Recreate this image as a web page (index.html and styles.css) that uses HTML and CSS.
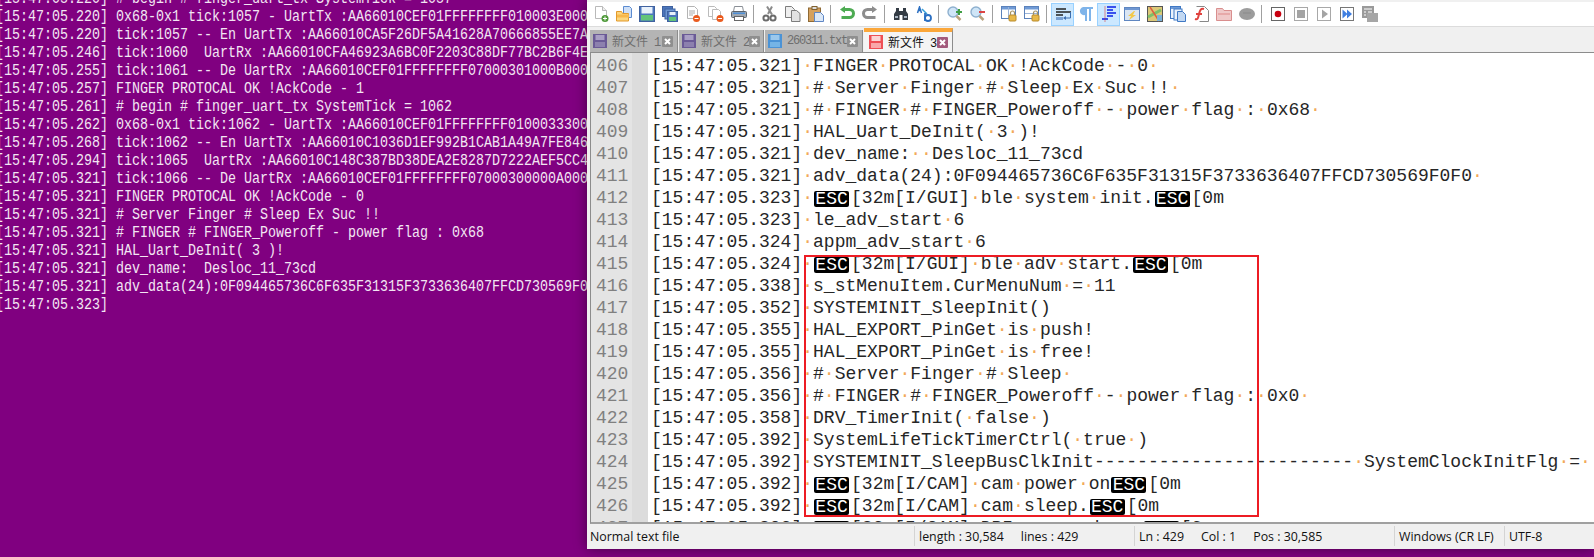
FILE: index.html
```html
<!DOCTYPE html>
<html lang="zh">
<head>
<meta charset="utf-8">
<title>Notepad++</title>
<link rel="stylesheet" href="styles.css">
</head>
<body>
<div class="desk">
<section class="term">
<div class="term-text">
<div>[15:47:05.220] # begin # finger_uart_tx SystemTick = 1057</div>
<div>[15:47:05.220] 0x68-0x1 tick:1057 - UartTx :AA66010CEF01FFFFFFFF010003E0000000</div>
<div>[15:47:05.220] tick:1057 -- En UartTx :AA66010CA5F26DF5A41628A70666855EE7A000</div>
<div>[15:47:05.246] tick:1060  UartRx :AA66010CFA46923A6BC0F2203C88DF77BC2B6F4E00</div>
<div>[15:47:05.255] tick:1061 -- De UartRx :AA66010CEF01FFFFFFFF07000301000B00000</div>
<div>[15:47:05.257] FINGER PROTOCAL OK !AckCode - 1</div>
<div>[15:47:05.261] # begin # finger_uart_tx SystemTick = 1062</div>
<div>[15:47:05.262] 0x68-0x1 tick:1062 - UartTx :AA66010CEF01FFFFFFFF0100033300000</div>
<div>[15:47:05.268] tick:1062 -- En UartTx :AA66010C1036D1EF992B1CAB1A49A7FE84600</div>
<div>[15:47:05.294] tick:1065  UartRx :AA66010C148C387BD38DEA2E8287D7222AEF5CC400</div>
<div>[15:47:05.321] tick:1066 -- De UartRx :AA66010CEF01FFFFFFFF07000300000A00000</div>
<div>[15:47:05.321] FINGER PROTOCAL OK !AckCode - 0</div>
<div>[15:47:05.321] # Server Finger # Sleep Ex Suc !!</div>
<div>[15:47:05.321] # FINGER # FINGER_Poweroff - power flag : 0x68</div>
<div>[15:47:05.321] HAL_Uart_DeInit( 3 )!</div>
<div>[15:47:05.321] dev_name:  Desloc_11_73cd</div>
<div>[15:47:05.321] adv_data(24):0F094465736C6F635F31315F3733636407FFCD730569F0F0</div>
<div>[15:47:05.323]</div>
</div>
</section>

<section class="npp">
<div class="toolbar">
<span class="btn"><svg viewBox="0 0 16 16"><path d="M2.500.5h7l4 4v8h-11z" fill="#fff" stroke="#b9b9b9"/><path d="M9.500.5v4h4" fill="#eee" stroke="#b9b9b9"/><circle cx="12" cy="12.500" r="3.500" fill="#4f9a3a"/><path d="M10 12.500h4M12 10.500v4" stroke="#fff"/></svg></span>
<span class="btn"><svg viewBox="0 0 16 16"><path d="M7.500.5h6l2 2v9h-8z" fill="#cfe0f7" stroke="#5b8bd0"/><path d="M.5 5.500h5l1 2h6v7.500h-12z" fill="#fbd680" stroke="#e39a2b"/><path d="M1 10h12" stroke="#f8b84a" stroke-width="3"/></svg></span>
<span class="btn"><svg viewBox="0 0 16 16"><rect x=".5" y=".5" width="15" height="15" fill="#4c76bc" stroke="#40629f"/><rect x="2.500" y="1" width="11" height="6.500" fill="#e8f1fb"/><rect x="2" y="9" width="12" height="5.500" fill="#62c47a"/></svg></span>
<span class="btn"><svg viewBox="0 0 16 16"><rect x=".5" y=".5" width="10" height="10" fill="#4c76bc" stroke="#3f62a0"/><rect x="3" y="3" width="10" height="10" fill="#6d97d4" stroke="#3f62a0"/><rect x="5.500" y="5.500" width="10" height="10" fill="#4c76bc" stroke="#3f62a0"/><rect x="7.500" y="6" width="6" height="3" fill="#e8f1fb"/><rect x="7" y="11" width="7" height="4" fill="#62c47a"/></svg></span>
<span class="btn"><svg viewBox="0 0 16 16"><path d="M2.500.5h7l3 3v9h-10z" fill="#fff" stroke="#b4b4b4"/><path d="M4 5h6M4 7h6M4 9h4" stroke="#aaa"/><circle cx="11.500" cy="12.500" r="3.500" fill="#ea5b1f"/><path d="M9.500 12.500h4" stroke="#fff"/></svg></span>
<span class="btn"><svg viewBox="0 0 16 16"><path d="M.5.5h6l2 2v8h-8z" fill="#fff" stroke="#bbb"/><path d="M4.500 3.500h6l2 2v8h-8z" fill="#fff" stroke="#bbb"/><circle cx="12" cy="12.500" r="3.500" fill="#ea5b1f"/><path d="M10 12.500h4" stroke="#fff"/></svg></span>
<span class="btn"><svg viewBox="0 0 16 16"><path d="M3.500.5h8l1 5h-10z" fill="#fff" stroke="#8a8f96"/><rect x=".5" y="5.500" width="15" height="6" rx="1" fill="#9fa8b2" stroke="#5d646c"/><rect x="2" y="6.500" width="12" height="1.500" fill="#4f8fd6"/><rect x="3.500" y="10.500" width="9" height="4" fill="#fff" stroke="#666"/></svg></span>
<span class="sep"></span>
<span class="btn"><svg viewBox="0 0 16 16"><path d="M10 .5L6 8M5 .5l5 8" fill="none" stroke="#8b8b8b" stroke-width="2"/><circle cx="4" cy="12" r="2.600" fill="none" stroke="#6b6b6b" stroke-width="2"/><circle cx="11" cy="12" r="2.600" fill="none" stroke="#6b6b6b" stroke-width="2"/></svg></span>
<span class="btn"><svg viewBox="0 0 16 16"><path d="M.5.5h6l3 3v8h-9z" fill="#efefef" stroke="#7d7d7d"/><path d="M6.500 4.500h5l3.500 3v8h-8.500z" fill="#e2e2e2" stroke="#7d7d7d"/></svg></span>
<span class="btn"><svg viewBox="0 0 16 16"><rect x=".5" y="2" width="12" height="13.500" fill="#d5a15e" stroke="#8f6a35"/><rect x="4" y=".5" width="5" height="3" fill="#ddd" stroke="#80602f"/><path d="M6.500 6.500h6l3 3v6h-9z" fill="#dbe8f8" stroke="#5f86c4"/></svg></span>
<span class="sep"></span>
<span class="btn"><svg viewBox="0 0 16 16"><path d="M4 3.500h6.500a4 4 0 0 1 0 8H2.500" fill="none" stroke="#4dab52" stroke-width="3"/><path d="M6 0L1 3.500 6 7z" fill="#4dab52"/></svg></span>
<span class="btn"><svg viewBox="0 0 16 16"><path d="M12 3.500H5.500a4 4 0 0 0 0 8h8" fill="none" stroke="#8d8d8d" stroke-width="3"/><path d="M10 0l5 3.500L10 7z" fill="#8d8d8d"/></svg></span>
<span class="sep"></span>
<span class="btn"><svg viewBox="0 0 16 16"><path d="M3 2h3v3h4V2h3v3l2 3v6H9.500V9h-3v5H1V8l2-3z" fill="#333b44"/><path d="M2 10h3v2H2zM11 10h3v2h-3z" fill="#aab6c4"/></svg></span>
<span class="btn"><svg viewBox="0 0 16 16"><path d="M1.500 7l2-6 2 6M2.500 4.500h2" fill="none" stroke="#2b6fc2" stroke-width="1.500"/><path d="M6 3l5 5" stroke="#38a0d8" stroke-width="1.500"/><circle cx="12" cy="12" r="3" fill="none" stroke="#2b6fc2" stroke-width="1.800"/><path d="M9 7v8" stroke="#2b6fc2" stroke-width="1.800"/></svg></span>
<span class="sep"></span>
<span class="btn"><svg viewBox="0 0 16 16"><circle cx="6" cy="6" r="5" fill="#cfe5f7" stroke="#8eb0cf" stroke-width="1.400"/><path d="M9.500 10l4 4" stroke="#b9a27e" stroke-width="2.500"/><path d="M9 6h6M12 3v6" stroke="#3f9e43" stroke-width="2"/></svg></span>
<span class="btn"><svg viewBox="0 0 16 16"><circle cx="6" cy="6" r="5" fill="#cfe5f7" stroke="#8eb0cf" stroke-width="1.400"/><path d="M9.500 10l4 4" stroke="#b9a27e" stroke-width="2.500"/><path d="M9 6h6" stroke="#dd4444" stroke-width="2"/></svg></span>
<span class="sep"></span>
<span class="btn"><svg viewBox="0 0 16 16"><rect x=".5" y=".5" width="14" height="12" fill="#fff" stroke="#5b82bb"/><rect x="1" y="1" width="13" height="2.500" fill="#6f9ad6"/><path d="M7.500 1v11" stroke="#9ab4d9"/><rect x="8" y="9" width="7" height="6" rx="1" fill="#e8b94a" stroke="#b98b2a"/><path d="M9.500 9V7a2 2 0 0 1 4 0v2" fill="none" stroke="#a59262" stroke-width="1.200"/></svg></span>
<span class="btn"><svg viewBox="0 0 16 16"><rect x=".5" y=".5" width="14" height="12" fill="#fff" stroke="#5b82bb"/><rect x="1" y="1" width="13" height="2.500" fill="#6f9ad6"/><path d="M1 7.500h13" stroke="#9ab4d9"/><rect x="8" y="9" width="7" height="6" rx="1" fill="#e8b94a" stroke="#b98b2a"/><path d="M9.500 9V7a2 2 0 0 1 4 0v2" fill="none" stroke="#a59262" stroke-width="1.200"/></svg></span>
<span class="sep"></span>
<span class="btn on"><svg viewBox="0 0 16 16"><path d="M1 3h10M1 6h15M1 9h7" stroke="#222" stroke-width="1.300"/><path d="M15.500 6v6H9" fill="none" stroke="#3c6fb0"/><path d="M11 10v4l-3-2z" fill="#3c6fb0"/><rect x="1" y="11" width="7" height="3" fill="#7aa2d4"/></svg></span>
<span class="btn"><svg viewBox="0 0 16 16"><path d="M5 1h10v2h-2v12h-2V3H9v12H7V9a4 4 0 0 1-2-8z" fill="#7fb4ea"/></svg></span>
<span class="btn on"><svg viewBox="0 0 16 16"><path d="M6 1h9M6 4h6M6 7h9M6 10h6M1 13h6" stroke="#0a1ee6" stroke-width="1.600"/><path d="M4 .5v15" stroke="#d92020" stroke-dasharray="1 1"/></svg></span>
<span class="btn"><svg viewBox="0 0 16 16"><rect x=".5" y="1.500" width="15" height="13" fill="#dbe6f3" stroke="#5f86c0"/><rect x="1" y="2" width="14" height="2" fill="#6f97d2"/><path d="M10 5L4 10h3l-2 4 7-5H9l2-4z" fill="#f3c94a"/></svg></span>
<span class="btn"><svg viewBox="0 0 16 16"><rect x=".5" y=".5" width="15" height="15" fill="#dbc878" stroke="#555"/><path d="M1 11L14 4" stroke="#7cc06a" stroke-width="3"/><path d="M3 1l9 14" stroke="#de5f3d" stroke-width="1.500"/><rect x="10" y="9" width="5" height="6" fill="#7db2d8"/></svg></span>
<span class="btn"><svg viewBox="0 0 16 16"><rect x=".5" y=".5" width="10" height="12" fill="#eaf2fc" stroke="#3f78c4"/><rect x="1" y="1" width="9" height="2" fill="#6f9ad6"/><rect x="4" y="3" width="8" height="11" fill="#eaf2fc" stroke="#3f78c4"/><path d="M7.500 5.500h5l3 3v7h-8z" fill="#c2d8f2" stroke="#3f78c4"/></svg></span>
<span class="btn"><svg viewBox="0 0 16 16"><path d="M3.500.5h8l4 4v11h-9" fill="#fff" stroke="#888"/><path d="M2 13c3 1 3-1 4-5s2-6 5-5M3 8h6" fill="none" stroke="#e0433f" stroke-width="2"/></svg></span>
<span class="btn"><svg viewBox="0 0 16 16"><path d="M.5 2.500h6l1.500 2h7.500v10H.5z" fill="#f0c9c9" stroke="#d98e8e"/><path d="M2 7h12v2H2z" fill="#e7a9a9"/></svg></span>
<span class="btn"><svg viewBox="0 0 16 16"><ellipse cx="8" cy="8" rx="8" ry="6" fill="#9c9c9c"/><path d="M4 7h8" stroke="#8a8a8a"/></svg></span>
<span class="sep"></span>
<span class="btn sm"><svg viewBox="0 0 14 14"><rect x=".5" y=".5" width="13" height="13" fill="#fff" stroke="#666"/><circle cx="7" cy="7" r="3.300" fill="#c80010"/></svg></span>
<span class="btn sm"><svg viewBox="0 0 14 14"><rect x=".5" y=".5" width="13" height="13" fill="#fff" stroke="#a8a8a8"/><rect x="3" y="3" width="8" height="8" fill="#a4a4a4"/></svg></span>
<span class="btn sm"><svg viewBox="0 0 14 14"><rect x=".5" y=".5" width="13" height="13" fill="#fff" stroke="#a8a8a8"/><path d="M5 2.500l6 4.500-6 4.500z" fill="#a4a4a4"/></svg></span>
<span class="btn sm"><svg viewBox="0 0 14 14"><rect x=".5" y=".5" width="13" height="13" fill="#fff" stroke="#777"/><path d="M2.500 2.500l5 4.500-5 4.500zM7 2.500l5 4.500-5 4.500z" fill="#3f7ee0"/></svg></span>
<span class="btn"><svg viewBox="0 0 16 16"><rect width="12" height="12" fill="#9a9a9a"/><rect x="5" y="7" width="11" height="9" fill="#a6a6a6"/><path d="M2 3h8M2 6h2M6 6h4M2 9h2" stroke="#fff"/></svg></span>
</div>

<div class="tabs">
<div class="tab t1"><svg class="tab-ico" viewBox="0 0 14 14"><rect width="14" height="14" fill="#6a5a96"/><rect x="2.500" y="1" width="9" height="5" fill="#a99fc4"/><rect x="2" y="8" width="10" height="5" fill="#8c80ae"/></svg><span class="tab-l"><span class="cjk">新文件</span> 1</span><svg class="x" viewBox="0 0 11 11"><rect width="11" height="11" rx="1"/><path d="M3 3l5 5M8 3l-5 5" stroke="#fff" stroke-width="2"/></svg></div>
<div class="tab t2"><svg class="tab-ico" viewBox="0 0 14 14"><rect width="14" height="14" fill="#6a5a96"/><rect x="2.500" y="1" width="9" height="5" fill="#a99fc4"/><rect x="2" y="8" width="10" height="5" fill="#8c80ae"/></svg><span class="tab-l"><span class="cjk">新文件</span> 2</span><svg class="x" viewBox="0 0 11 11"><rect width="11" height="11" rx="1"/><path d="M3 3l5 5M8 3l-5 5" stroke="#fff" stroke-width="2"/></svg></div>
<div class="tab t3"><svg class="tab-ico" viewBox="0 0 14 14"><rect width="14" height="14" fill="#4b93d6"/><rect x="2.500" y="1" width="9" height="5" fill="#9cc8ec"/><rect x="2" y="8" width="10" height="5" fill="#75b4e6"/></svg><span class="tab-l">260311.txt</span><svg class="x" viewBox="0 0 11 11"><rect width="11" height="11" rx="1"/><path d="M3 3l5 5M8 3l-5 5" stroke="#fff" stroke-width="2"/></svg></div>
<div class="tab t4 active"><svg class="tab-ico" viewBox="0 0 14 14"><rect width="14" height="14" fill="#ee4f55"/><rect x="2.500" y="1" width="9" height="5" fill="#fbd5d5"/><rect x="2" y="8" width="10" height="5" fill="#f9a7a9"/></svg><span class="tab-l"><span class="cjk">新文件</span> 3</span><svg class="x" viewBox="0 0 11 11"><rect width="11" height="11" rx="1"/><path d="M3 3l5 5M8 3l-5 5" stroke="#fff" stroke-width="2"/></svg></div>
</div>

<div class="editor">
<div class="gutter">
<div>406</div><div>407</div><div>408</div><div>409</div><div>410</div><div>411</div><div>412</div><div>413</div><div>414</div><div>415</div><div>416</div><div>417</div><div>418</div><div>419</div><div>420</div><div>421</div><div>422</div><div>423</div><div>424</div><div>425</div><div>426</div><div>427</div>
</div>
<div class="code">
<div>[15:47:05.321]<i>·</i>FINGER<i>·</i>PROTOCAL<i>·</i>OK<i>·</i>!AckCode<i>·</i>-<i>·</i>0<i>·</i></div>
<div>[15:47:05.321]<i>·</i>#<i>·</i>Server<i>·</i>Finger<i>·</i>#<i>·</i>Sleep<i>·</i>Ex<i>·</i>Suc<i>·</i>!!<i>·</i></div>
<div>[15:47:05.321]<i>·</i>#<i>·</i>FINGER<i>·</i>#<i>·</i>FINGER_Poweroff<i>·</i>-<i>·</i>power<i>·</i>flag<i>·</i>:<i>·</i>0x68<i>·</i></div>
<div>[15:47:05.321]<i>·</i>HAL_Uart_DeInit(<i>·</i>3<i>·</i>)!</div>
<div>[15:47:05.321]<i>·</i>dev_name:<i>·</i><i>·</i>Desloc_11_73cd</div>
<div>[15:47:05.321]<i>·</i>adv_data(24):0F094465736C6F635F31315F3733636407FFCD730569F0F0<i>·</i></div>
<div>[15:47:05.323]<i>·</i><span class="esc">ESC</span>[32m[I/GUI]<i>·</i>ble<i>·</i>system<i>·</i>init.<span class="esc">ESC</span>[0m</div>
<div>[15:47:05.323]<i>·</i>le_adv_start<i>·</i>6</div>
<div>[15:47:05.324]<i>·</i>appm_adv_start<i>·</i>6</div>
<div>[15:47:05.324]<i>·</i><span class="esc">ESC</span>[32m[I/GUI]<i>·</i>ble<i>·</i>adv<i>·</i>start.<span class="esc">ESC</span>[0m</div>
<div>[15:47:05.338]<i>·</i>s_stMenuItem.CurMenuNum<i>·</i>=<i>·</i>11</div>
<div>[15:47:05.352]<i>·</i>SYSTEMINIT_SleepInit()</div>
<div>[15:47:05.355]<i>·</i>HAL_EXPORT_PinGet<i>·</i>is<i>·</i>push!</div>
<div>[15:47:05.355]<i>·</i>HAL_EXPORT_PinGet<i>·</i>is<i>·</i>free!</div>
<div>[15:47:05.356]<i>·</i>#<i>·</i>Server<i>·</i>Finger<i>·</i>#<i>·</i>Sleep<i>·</i></div>
<div>[15:47:05.356]<i>·</i>#<i>·</i>FINGER<i>·</i>#<i>·</i>FINGER_Poweroff<i>·</i>-<i>·</i>power<i>·</i>flag<i>·</i>:<i>·</i>0x0<i>·</i></div>
<div>[15:47:05.358]<i>·</i>DRV_TimerInit(<i>·</i>false<i>·</i>)</div>
<div>[15:47:05.392]<i>·</i>SystemLifeTickTimerCtrl(<i>·</i>true<i>·</i>)</div>
<div>[15:47:05.392]<i>·</i>SYSTEMINIT_SleepBusClkInit------------------------<i>·</i>SystemClockInitFlg<i>·</i>=<i>·</i></div>
<div>[15:47:05.392]<i>·</i><span class="esc">ESC</span>[32m[I/CAM]<i>·</i>cam<i>·</i>power<i>·</i>on<span class="esc">ESC</span>[0m</div>
<div>[15:47:05.392]<i>·</i><span class="esc">ESC</span>[32m[I/CAM]<i>·</i>cam<i>·</i>sleep.<span class="esc">ESC</span>[0m</div>
<div>[15:47:05.392]<i>·</i><span class="esc">ESC</span>[32m[I/CAM]<i>·</i>DPI<i>·</i>power<i>·</i>down.<span class="esc">ESC</span>[0m</div>
</div>
<div class="mark"></div>
</div>

<div class="status">
<div class="cell c1">Normal text file</div>
<div class="cell"><span>length : 30,584</span><span>lines : 429</span></div>
<div class="cell"><span>Ln : 429</span><span>Col : 1</span><span>Pos : 30,585</span></div>
<div class="cell">Windows (CR LF)</div>
<div class="cell">UTF-8</div>
</div>
</section>
</div>
</body>
</html>
```
FILE: styles.css
```css
html, body { margin: 0; padding: 0; height: 100%; overflow: hidden; background: #800080; }
.desk { display: flex; width: 1594px; height: 557px; overflow: hidden; }

.term { width: 587px; flex: none; height: 557px; overflow: hidden; background: #800080; }
.term-text {
  width: 704px;
  margin: -10px 0 0 -4px;
  font: 16px/18px "Liberation Mono", monospace;
  color: #f3e6f3;
  transform: scaleX(.8333);
  transform-origin: left top;
}
.term-text div { white-space: pre; }

.npp {
  width: 1007px; flex: none; height: 549px;
  display: flex; flex-direction: column;
  background: #f0f0f0;
  box-shadow: 0 0 12px rgba(0,0,0,.45);
  position: relative;
}

.toolbar {
  height: 24px; flex: none;
  margin-top: 2px;
  padding-left: 2px;
  background: #fff;
  border-bottom: 1px solid #dcdcdc;
  display: flex; align-items: center;
}
.btn { width: 23px; height: 23px; flex: none; display: flex; align-items: center; justify-content: center; box-sizing: border-box; }
.btn svg { width: 16px; height: 16px; display: block; }
.btn.sm svg { width: 14px; height: 14px; }
.btn.on { background: #cce8ff; border: 1px solid #99d1ff; }
.sep { width: 8px; height: 18px; flex: none; }
.sep::before { content: ""; display: block; width: 1px; height: 18px; margin-left: 3px; background: #a0a0a0; }

.tabs {
  height: 25px; flex: none;
  padding-left: 3px;
  display: flex; align-items: flex-end; gap: 1px;
  background: #f0f0f0;
}
.tab {
  height: 22px; box-sizing: border-box;
  padding: 0 4px 0 3px;
  display: flex; align-items: center;
  background: #b4b4b4;
  border-right: 1px solid #8c8c8c;
  color: #6e6e6e;
  font: 12px "Liberation Mono", monospace;
  letter-spacing: -1.2px;
}
.t1 { width: 88px; }
.t2 { width: 85px; }
.t3 { width: 98px; }
.t4 { width: 89px; }
.tab.active {
  height: 24px; padding-left: 5px;
  background: #f4f4f4;
  border-top: 4px solid #fba73a;
  color: #111;
}
.tab-ico { width: 14px; height: 14px; flex: none; margin-right: 5px; }
.tab-l { white-space: pre; }
.cjk { font: 12px "Noto Sans CJK SC", sans-serif; letter-spacing: 0; }
.x { width: 11px; height: 11px; flex: none; margin-left: auto; fill: #8f8f8f; }
.active .x { fill: #a35a7c; }

.editor {
  flex: none; height: 472px;
  margin-left: 3px;
  background: #fff;
  border-top: 1px solid #8c8c8c;
  border-left: 1px solid #8c8c8c;
  border-bottom: 2px solid #a0a0a0;
  box-sizing: border-box;
  display: flex;
  overflow: hidden;
  position: relative;
  font: 18px/22px "Liberation Mono", monospace;
  padding-top: 2px;
}
.gutter {
  width: 57px; flex: none;
  margin-top: -2px; padding: 2px 0 0 5px;
  box-sizing: border-box;
  color: #808080;
  background: linear-gradient(to right, #e4e4e4 41px, #dcdcdc 41px);
  height: 520px;
}
.code { padding-left: 3px; color: #262626; }
.code div { white-space: pre; }
.code i { font-style: normal; color: #f2a95a; }
.esc {
  display: inline-block;
  width: 35px; height: 16px;
  margin: 0 2px 0 1px;
  background: #000; color: #fff;
  border-radius: 2px;
  font: 18px/16px "Liberation Mono", monospace;
  text-align: center;
  vertical-align: -1px;
}
.mark {
  position: absolute;
  left: 213px; top: 202px;
  width: 455px; height: 262px;
  border: 2px solid #ed1c24;
  box-sizing: border-box;
}

.status {
  flex: none; height: 24px;
  display: grid;
  grid-template-columns: 327px 220px 260px 110px 1fr;
  font: 12.4px "Open Sans", sans-serif;
  color: #111;
  background: #f0f0f0;
}
.cell {
  display: flex; align-items: center; gap: 17px;
  padding-left: 4px;
  border-left: 1px solid #d4d4d4;
  margin: 2px 0;
  white-space: nowrap;
}
.c1 { border-left: 0; padding-left: 3px; }
```
